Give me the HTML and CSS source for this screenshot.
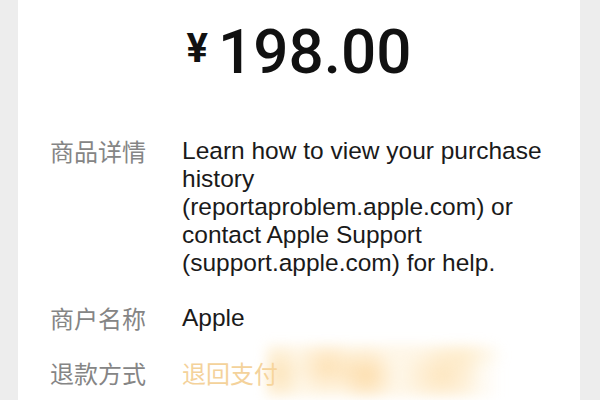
FILE: index.html
```html
<!DOCTYPE html>
<html lang="zh-CN">
<head>
<meta charset="utf-8">
<link rel="stylesheet" href="styles.css">
</head>
<body>
<div class="card">
  <div class="price"><span class="yen">¥</span><span class="amount">198.00</span></div>
  <div class="rows">
    <div class="row">
      <div class="label">商品详情</div>
      <div class="value">Learn how to view your purchase history (reportaproblem.apple.com) or contact Apple Support (support.apple.com) for help.</div>
    </div>
    <div class="row">
      <div class="label">商户名称</div>
      <div class="value">Apple</div>
    </div>
    <div class="row">
      <div class="label">退款方式</div>
      <div class="value refund">退回支付<span class="smear"></span></div>
    </div>
  </div>
</div>
</body>
</html>
```
FILE: styles.css
```css
html, body {
  margin: 0;
  padding: 0;
  background: #ededed;
  overflow: hidden;
}
.card {
  margin: 0 20px 0 18px;
  height: 400px;
  background: #ffffff;
  display: flex;
  flex-direction: column;
}
.price {
  display: flex;
  justify-content: center;
  align-items: baseline;
  padding-top: 19px;
  color: #111;
  font-family: Roboto, "Liberation Sans", sans-serif;
  font-weight: 500;
}
.yen {
  font-size: 40px;
  font-weight: 700;
  margin-right: 10px;
  line-height: 66px;
  position: relative;
  top: -11px;
}
.amount {
  font-size: 62px;
  line-height: 66px;
}
.rows {
  display: flex;
  flex-direction: column;
  gap: 27px;
  padding: 0 20px 0 32px;
  margin-top: 44px;
}
.row {
  display: flex;
}
.label {
  width: 132px;
  flex: none;
  font-family: "Noto Sans CJK SC", sans-serif;
  font-size: 24px;
  line-height: 28px;
  color: #858585;
}
.value {
  font-family: "Liberation Sans", "Noto Sans CJK SC", sans-serif;
  font-size: 24.5px;
  line-height: 28px;
  color: #1a1a1a;
  width: 370px;
}
.refund {
  position: relative;
  font-family: "Noto Sans CJK SC", sans-serif;
  font-size: 24px;
  color: #f4d29b;
}
.smear {
  position: absolute;
  left: 84px;
  top: -14px;
  width: 236px;
  height: 52px;
  filter: blur(6px);
  background:
    radial-gradient(ellipse 22px 30px at 14px 28px, rgba(250,210,140,0.5), rgba(250,210,140,0) 100%),
    radial-gradient(ellipse 34px 28px at 62px 22px, rgba(252,200,120,0.45), rgba(252,200,120,0) 100%),
    radial-gradient(ellipse 30px 30px at 100px 30px, rgba(251,195,110,0.5), rgba(251,195,110,0) 100%),
    radial-gradient(ellipse 40px 30px at 176px 30px, rgba(252,205,130,0.4), rgba(252,205,130,0) 100%),
    radial-gradient(ellipse 40px 18px at 200px 10px, rgba(253,225,170,0.35), rgba(253,225,170,0) 100%),
    linear-gradient(90deg, rgba(253,226,175,0.3), rgba(253,226,175,0.3) 85%, rgba(253,226,175,0));
}
```
